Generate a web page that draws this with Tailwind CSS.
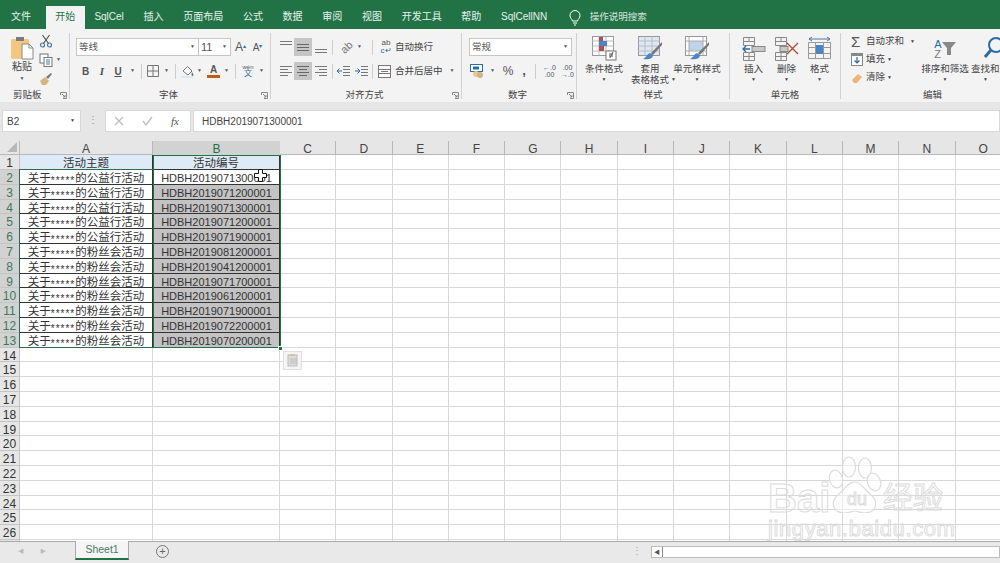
<!DOCTYPE html>
<html>
  <head>
    <meta charset="UTF-8" />
    <title>Excel</title>
    <script src="https://cdn.jsdelivr.net/npm/@tailwindcss/browser@4"></script>
  </head>
  <body class="w-[1000px] h-[563px] overflow-hidden bg-white text-[#444] font-['Liberation_Sans','Noto_Sans_CJK_SC',sans-serif]">

    <!-- title / tabs -->
    <div class="h-[29px] bg-[#217346] flex items-end pl-[11px] gap-[19.7px] text-[10px] text-white/90 whitespace-nowrap">
      <span class="h-[23px] leading-[22px]">文件</span>
      <span class="h-[23px] leading-[22px] w-[39px] -ml-[5px] -mr-[10px] text-center bg-[#f3f3f3] text-[#217346]">开始</span>
      <span class="h-[23px] leading-[22px]">SqlCel</span>
      <span class="h-[23px] leading-[22px]">插入</span>
      <span class="h-[23px] leading-[22px]">页面布局</span>
      <span class="h-[23px] leading-[22px]">公式</span>
      <span class="h-[23px] leading-[22px]">数据</span>
      <span class="h-[23px] leading-[22px]">审阅</span>
      <span class="h-[23px] leading-[22px]">视图</span>
      <span class="h-[23px] leading-[22px]">开发工具</span>
      <span class="h-[23px] leading-[22px]">帮助</span>
      <span class="h-[23px] leading-[22px]">SqlCellNN</span>
      <span class="h-[23px] flex items-center gap-[9px] ml-[2px]">
        <svg width="12" height="16" viewBox="0 0 12 16" fill="none" stroke="#fff" stroke-width="1"><path d="M3.5 11C3 9 1 8 1 5.5a5 5 0 0 1 10 0C11 8 9 9 8.500 11zM4 13h4M5 15h2"/></svg>
        <span class="text-white/80 text-[9.5px]">操作说明搜索</span>
      </span>
    </div>

    <!-- ribbon -->
    <div class="h-[73px] bg-[#f3f3f3] flex text-[9.5px] text-[#555] whitespace-nowrap">

      <!-- clipboard -->
      <div class="w-[70px] border-r border-[#d0d0d0] mt-[4px] mb-[3px] flex flex-col">
        <div class="flex flex-1 pl-[10px] pt-[1px]">
          <div class="w-[24px] flex flex-col items-center">
            <svg class="mt-[3px]" width="24" height="23" viewBox="0 0 24 23"><rect x="1" y="2" width="18" height="20" rx="1.500" fill="#f2c781"/><rect x="6" y="0" width="8" height="4" fill="#7a7a7a"/><path d="M12 7h7l4 4v11H12z" fill="#fff" stroke="#888"/><path d="M19 7v4h4" fill="none" stroke="#888"/></svg>
            <span class="text-[10px] leading-[11px] mt-[1px] text-[#444]">粘贴</span>
            <span class="text-[5px] leading-[12px]">▼</span>
          </div>
          <div class="ml-[5px] flex flex-col gap-[5px]">
            <svg width="14" height="14" viewBox="0 0 14 14" fill="none" stroke="#4a7ba6" stroke-width="1.200"><circle cx="3.500" cy="11" r="2"/><circle cx="10.500" cy="11" r="2"/><path d="M4.500 9.500 10.500 1M9.500 9.500 3.500 1" stroke="#555"/></svg>
            <div class="flex items-center gap-[3px]">
              <svg width="14" height="14" viewBox="0 0 14 14" fill="#fff" stroke="#777"><rect x="1" y="1" width="8" height="9"/><rect x="5" y="4.500" width="8" height="9"/><path d="M7 7h4M7 9h4M7 11h4" stroke="#4a7ba6"/></svg>
              <span class="text-[5px]">▼</span>
            </div>
            <svg width="14" height="14" viewBox="0 0 14 14"><path d="M1 9 6 5l4 4-3 4H3z" fill="#d9b27c"/><path d="m7 5 5-4 1 1-4 5z" fill="#777"/></svg>
          </div>
        </div>
        <div class="h-[8px] flex items-center justify-between pl-[13px] pr-[2px] leading-none">
          <span class="text-[#444]">剪贴板</span>
          <svg width="7" height="7" viewBox="0 0 7 7" fill="none" stroke="#888"><path d="M.5 3V.5H6.500V6.500H3M2 2l3 3M5 3v2H3"/></svg>
        </div>
      </div>

      <!-- font -->
      <div class="w-[201px] border-r border-[#d0d0d0] mt-[4px] mb-[3px] flex flex-col">
        <div class="flex-1 pl-[6px]">
          <div class="flex items-center h-[18px] mt-[5px]">
            <div class="w-[123px] h-[18px] bg-white border border-[#c6c6c6] flex items-center justify-between pl-[2px] pr-[3px]"><span>等线</span><span class="text-[5px]">▼</span></div>
            <div class="w-[32px] h-[18px] bg-white border border-l-0 border-[#c6c6c6] flex items-center justify-between pl-[2px] pr-[3px]"><span class="text-[11px]">11</span><span class="text-[5px]">▼</span></div>
            <span class="ml-[1px] text-[12px] w-[17px] text-center">A<sup class="text-[6px] text-[#2b6ca3]">▴</sup></span>
            <span class="text-[10px] w-[17px] text-center">A<sup class="text-[6px] text-[#2b6ca3]">▾</sup></span>
          </div>
          <div class="flex items-center h-[18px] mt-[6px] pl-[1px]">
            <span class="w-[17px] text-center font-bold text-[10px]">B</span>
            <span class="w-[16px] text-center italic font-['Liberation_Serif'] font-bold text-[11px]">I</span>
            <span class="w-[16px] text-center underline font-bold text-[10px]">U</span>
            <span class="w-[15px] text-[5px] pl-[4px]">▼</span>
            <span class="w-px h-[15px] bg-[#ccc] mr-[5px]"></span>
            <svg width="12" height="12" viewBox="0 0 12 12" fill="none" stroke="#777"><path d="M.5.500h11v11H.5zM6 .5v11M.5 6h11"/></svg>
            <span class="w-[16px] text-[5px] pl-[5px]">▼</span>
            <span class="w-px h-[15px] bg-[#ccc] mr-[5px]"></span>
            <svg width="14" height="14" viewBox="0 0 14 14"><path d="M2 7 6.500 2.500 11 7l-4 4z" fill="#fff" stroke="#777"/><path d="M11 8c1 1.500 1.500 2 1.500 3a1 1 0 0 1-2 0c0-1 0-2 .5-3z" fill="#777"/><rect y="12" width="12" height="2" fill="#dbe7f3"/></svg>
            <span class="w-[12px] text-[5px] pl-[2px]">▼</span>
            <div class="w-[13px] flex flex-col items-center"><span class="text-[10px] leading-[11px] font-bold">A</span><span class="w-[13px] h-[3px] bg-[#c55a11]"></span></div>
            <span class="w-[15px] text-[5px] pl-[4px]">▼</span>
            <span class="w-px h-[15px] bg-[#ccc] mr-[5px]"></span>
            <div class="w-[14px] flex flex-col items-center leading-none"><span class="text-[6px]">wén</span><span class="text-[8px] text-[#2b6ca3]">文</span></div>
            <span class="text-[5px] pl-[4px]">▼</span>
          </div>
        </div>
        <div class="h-[8px] flex items-center pr-[2px] leading-none">
          <span class="flex-1 text-center text-[#444] pl-[6px]">字体</span>
          <svg width="7" height="7" viewBox="0 0 7 7" fill="none" stroke="#888"><path d="M.5 3V.5H6.500V6.500H3M2 2l3 3M5 3v2H3"/></svg>
        </div>
      </div>

      <!-- alignment -->
      <div class="w-[191px] border-r border-[#d0d0d0] mt-[4px] mb-[3px] flex flex-col">
        <div class="flex-1 pl-[6px]">
          <div class="flex items-center h-[18px] mt-[5px]">
            <div class="w-[17px] h-[18px] flex items-center justify-center"><svg width="12" height="18" viewBox="0 0 12 18" stroke="#777"><path d="M0 3.500h12M0 6.500h12"/></svg></div>
            <div class="w-[18px] h-[18px] flex items-center justify-center bg-[#c6c6c6]"><svg width="12" height="18" viewBox="0 0 12 18" stroke="#666"><path d="M0 6.500h12M0 9.500h12M0 12.500h12"/></svg></div>
            <div class="w-[18px] h-[18px] flex items-center justify-center"><svg width="12" height="18" viewBox="0 0 12 18" stroke="#777"><path d="M0 11.500h12M0 14.500h12"/></svg></div>
            <span class="w-px h-[15px] bg-[#ccc] ml-[2px] mr-[7px]"></span>
            <span class="w-[13px] text-[#777] text-[11px] -rotate-45 text-center">ab</span>
            <span class="w-[19px] text-[5px] pl-[4px]">▼</span>
            <span class="w-px h-[15px] bg-[#ccc] mr-[6px]"></span>
            <span class="w-[14px] leading-[8px] text-[8px] text-center"><span class="text-[#555]">ab</span><br><span class="text-[#2b6ca3]">c↵</span></span>
            <span class="ml-[2px] text-[#444]">自动换行</span>
          </div>
          <div class="flex items-center h-[18px] mt-[6px]">
            <div class="w-[17px] h-[18px] flex items-center justify-center"><svg width="12" height="12" viewBox="0 0 12 12" stroke="#777"><path d="M0 1.500h12M0 4.500h8M0 7.500h12M0 10.500h8"/></svg></div>
            <div class="w-[18px] h-[18px] flex items-center justify-center bg-[#c6c6c6]"><svg width="12" height="12" viewBox="0 0 12 12" stroke="#666"><path d="M0 1.500h12M2 4.500h8M0 7.500h12M2 10.500h8"/></svg></div>
            <div class="w-[18px] h-[18px] flex items-center justify-center"><svg width="12" height="12" viewBox="0 0 12 12" stroke="#777"><path d="M0 1.500h12M4 4.500h8M0 7.500h12M4 10.500h8"/></svg></div>
            <span class="w-px h-[15px] bg-[#ccc] ml-[2px] mr-[4px]"></span>
            <svg width="13" height="12" viewBox="0 0 13 12" fill="none"><path d="M6 1.500h7M6 4.500h7M6 7.500h7M6 10.500h7" stroke="#777"/><path d="M5 6H0M2.500 3.500 0 6l2.500 2.500" stroke="#2b6ca3"/></svg>
            <svg class="ml-[5px]" width="13" height="12" viewBox="0 0 13 12" fill="none"><path d="M6 1.500h7M6 4.500h7M6 7.500h7M6 10.500h7" stroke="#777"/><path d="M0 6h5M2.500 3.500 5 6 2.500 8.500" stroke="#2b6ca3"/></svg>
            <span class="w-px h-[15px] bg-[#ccc] ml-[4px] mr-[5px]"></span>
            <svg width="13" height="13" viewBox="0 0 13 13" fill="#fff" stroke="#777"><rect x=".5" y=".5" width="12" height="12"/><path d="M.5 4.500h12M.5 8.500h12M3 6.500h7" /></svg>
            <span class="ml-[4px] text-[#444]">合并后居中</span>
            <span class="text-[5px] pl-[7px]">▼</span>
          </div>
        </div>
        <div class="h-[8px] flex items-center pr-[2px] leading-none">
          <span class="flex-1 text-center text-[#444] pl-[6px]">对齐方式</span>
          <svg width="7" height="7" viewBox="0 0 7 7" fill="none" stroke="#888"><path d="M.5 3V.5H6.500V6.500H3M2 2l3 3M5 3v2H3"/></svg>
        </div>
      </div>

      <!-- number -->
      <div class="w-[115px] border-r border-[#d0d0d0] mt-[4px] mb-[3px] flex flex-col">
        <div class="flex-1 pl-[7px]">
          <div class="w-[103px] h-[18px] mt-[5px] bg-white border border-[#c6c6c6] flex items-center justify-between pl-[2px] pr-[3px]"><span>常规</span><span class="text-[5px]">▼</span></div>
          <div class="flex items-center h-[18px] mt-[6px] pl-[1px]">
            <svg width="14" height="14" viewBox="0 0 14 14"><rect x=".5" y=".5" width="12" height="7" fill="#fff" stroke="#2b6ca3"/><rect x="3" y="2.500" width="6" height="3" fill="#2b6ca3"/><circle cx="6" cy="10" r="3" fill="#e8c98f"/><circle cx="10" cy="11" r="3" fill="#cdb48a"/></svg>
            <span class="w-[16px] text-[5px] pl-[6px]">▼</span>
            <span class="w-[16px] text-[12px] text-center">%</span>
            <span class="w-[16px] text-[13px] font-bold text-center leading-[10px]">,</span>
            <span class="w-px h-[15px] bg-[#ccc] ml-[3px] mr-[5px]"></span>
            <span class="w-[17px] text-[7px] leading-[7px] text-center"><span class="text-[#2b6ca3]">←</span>.0<br>.00</span>
            <span class="w-[17px] text-[7px] leading-[7px] text-center ml-[1px]">.00<br><span class="text-[#2b6ca3]">→</span>.0</span>
          </div>
        </div>
        <div class="h-[8px] flex items-center pr-[2px] leading-none">
          <span class="flex-1 text-center text-[#444] pl-[6px]">数字</span>
          <svg width="7" height="7" viewBox="0 0 7 7" fill="none" stroke="#888"><path d="M.5 3V.5H6.500V6.500H3M2 2l3 3M5 3v2H3"/></svg>
        </div>
      </div>

      <!-- styles -->
      <div class="w-[153px] border-r border-[#d0d0d0] mt-[4px] mb-[3px] flex flex-col">
        <div class="flex-1 flex pl-[1px] text-[#444] leading-[11px] text-center">
          <div class="w-[52px] flex flex-col items-center">
            <svg class="mt-[3px]" width="25" height="25" viewBox="0 0 25 25"><rect x=".5" y=".5" width="21" height="19" fill="#fff" stroke="#999"/><path d="M7 .5v19M14 .5v19M.5 5h21M.5 10h21M.5 15h21" stroke="#bbb"/><rect x="7" y="1" width="4" height="4" fill="#b0504a"/><rect x="7" y="5" width="8" height="5" fill="#4a86c5"/><rect x="7" y="10" width="5" height="5" fill="#b0504a"/><rect x="14" y="15" width="10" height="9" fill="#fff" stroke="#777"/><path d="M17 20h4M17 18h4M21 16l-3 6" stroke="#555" fill="none"/></svg>
            <span class="mt-[2px]">条件格式</span>
            <span class="text-[5px]">▼</span>
          </div>
          <div class="w-[40px] flex flex-col items-center">
            <svg class="mt-[3px]" width="25" height="25" viewBox="0 0 25 25"><rect x=".5" y=".5" width="21" height="19" fill="#dfe8f2" stroke="#999"/><path d="M7 .5v19M14 .5v19M.5 5h21M.5 10h21M.5 15h21" stroke="#b5bcc5"/><path d="M24 6 13 17l2 2 9-10z" fill="#777"/><path d="M12 17c-3 1-3 4-7 6 5 1 10 0 10-4z" fill="#4a86c5"/></svg>
            <span class="mt-[2px]">套用</span>
            <span class="relative">表格格式<span class="absolute left-full top-0 text-[5px] pl-[2px]">▼</span></span>
          </div>
          <div class="w-[54px] flex flex-col items-center">
            <svg class="mt-[3px]" width="25" height="25" viewBox="0 0 25 25"><rect x=".5" y=".5" width="21" height="19" fill="#fff" stroke="#999"/><rect x="4" y="5" width="14" height="10" fill="#bcd3ea"/><path d="M.5 5h21M.5 15h21M4 .5v19M18 .5v19" stroke="#aaa"/><path d="M24 6 13 17l2 2 9-10z" fill="#777"/><path d="M12 17c-3 1-3 4-7 6 5 1 10 0 10-4z" fill="#4a86c5"/></svg>
            <span class="mt-[2px]">单元格样式</span>
            <span class="text-[5px]">▼</span>
          </div>
        </div>
        <div class="h-[8px] leading-[8px] text-center text-[#444]">样式</div>
      </div>

      <!-- cells -->
      <div class="w-[111px] border-r border-[#d0d0d0] mt-[4px] mb-[3px] flex flex-col">
        <div class="flex-1 flex pl-[7px] text-[#444] leading-[11px] text-center">
          <div class="w-[33px] flex flex-col items-center">
            <svg class="mt-[3px]" width="25" height="25" viewBox="0 0 25 25" fill="none" stroke="#888"><path d="M2.500 1.500h11v8h-11zM2.500 5.500h11M8 1.500v4"/><path d="M2.500 16.500h11v8h-11zM2.500 20.500h11M8 16.500v8"/><rect x="11" y="10.500" width="13" height="5" fill="#c8c8c8"/><path d="M9 13H2M5 10l-3 3 3 3" stroke="#2b6ca3" stroke-width="1.300"/></svg>
            <span class="mt-[2px]">插入</span>
            <span class="text-[5px]">▼</span>
          </div>
          <div class="w-[33px] flex flex-col items-center">
            <svg class="mt-[3px]" width="25" height="25" viewBox="0 0 25 25" fill="none" stroke="#888"><path d="M1.500 1.500h11v8h-11zM1.500 5.500h11M7 1.500v4"/><path d="M1.500 16.500h11v8h-11zM1.500 20.500h11M7 16.500v8"/><rect x="6" y="10.500" width="8" height="5" fill="#c8c8c8"/><path d="m13 7 11 11M24 7 13 18" stroke="#b5482f" stroke-width="1.300"/></svg>
            <span class="mt-[2px]">删除</span>
            <span class="text-[5px]">▼</span>
          </div>
          <div class="w-[33px] flex flex-col items-center">
            <svg class="mt-[3px]" width="25" height="25" viewBox="0 0 25 25" fill="none" stroke="#999"><path d="M1.500 6.500h22v16h-22zM1.500 11.500h22M1.500 17.500h22M8.500 6.500v16M16.500 6.500v16"/><rect x="9" y="9" width="7" height="9" fill="#4a86c5" stroke="none"/><path d="M2 3h21M5 1 2 3l3 2M20 1l3 2-3 2" stroke="#4a7ba6"/></svg>
            <span class="mt-[2px]">格式</span>
            <span class="text-[5px]">▼</span>
          </div>
        </div>
        <div class="h-[8px] leading-[8px] text-center text-[#444]">单元格</div>
      </div>

      <!-- editing -->
      <div class="flex-1 mt-[4px] mb-[3px] flex flex-col overflow-hidden">
        <div class="flex-1 flex text-[#444]">
          <div class="w-[80px] pl-[10px] pt-[2px] flex flex-col gap-[5px] shrink-0">
            <div class="h-[13px] flex items-center">
              <span class="w-[13px] text-[15px] leading-none text-[#555]">Σ</span>
              <span class="ml-[2px]">自动求和</span><span class="text-[5px] pl-[6px]">▼</span>
            </div>
            <div class="h-[13px] flex items-center">
              <svg width="12" height="13" viewBox="0 0 12 13" fill="#fff"><rect x=".5" y=".5" width="11" height="12" stroke="#888"/><rect x="1" y="1" width="10" height="2" fill="#888"/><path d="M6 4v6M3.500 7.500 6 10l2.500-2.500" fill="none" stroke="#2b6ca3" stroke-width="1.200"/></svg>
              <span class="ml-[3px]">填充</span><span class="text-[5px] pl-[2px]">▼</span>
            </div>
            <div class="h-[13px] flex items-center">
              <svg width="12" height="12" viewBox="0 0 12 12"><path d="M1 8 7 2l4 3-5 6H3z" fill="#eeb37a"/></svg>
              <span class="ml-[3px]">清除</span><span class="text-[5px] pl-[2px]">▼</span>
            </div>
          </div>
          <div class="w-[48px] flex flex-col items-center shrink-0 leading-[11px]">
            <div class="h-[25px] mt-[3px] flex items-center">
              <div class="flex flex-col leading-[10px] text-[11px]"><span class="text-[#2b6ca3]">A</span><span class="text-[#777]">Z</span></div>
              <svg width="14" height="13" viewBox="0 0 14 13"><path d="M0 0h14L9 6v7H5V6z" fill="#888"/></svg>
            </div>
            <span class="mt-[2px]">排序和筛选</span>
            <span class="text-[5px]">▼</span>
          </div>
          <div class="w-[40px] flex flex-col items-start shrink-0 leading-[11px] ml-[2px]">
            <svg class="mt-[3px] ml-[13px]" width="18" height="25" viewBox="0 0 18 25" fill="none" stroke="#2b6ca3" stroke-width="2"><circle cx="12" cy="9" r="7"/><path d="m7 14-6 7" stroke-width="3"/></svg>
            <span class="mt-[2px]">查找和选择</span>
            <span class="text-[5px] pl-[12px]">▼</span>
          </div>
        </div>
        <div class="h-[8px] leading-[8px] text-[#444] pl-[82px]">编辑</div>
      </div>
    </div>

    <!-- formula bar -->
    <div class="h-[39px] bg-[#e6e6e6] pt-[8px] flex items-start text-[#444]">
      <div class="ml-[2px] w-[79px] h-[22px] bg-white border border-[#d8d8d8] flex items-center justify-between pl-[4px] pr-[5px] text-[10px]"><span>B2</span><span class="text-[5px]">▼</span></div>
      <span class="w-[24px] h-[22px] leading-[20px] text-center text-[#999] text-[10px]">⋮</span>
      <div class="w-[86px] h-[22px] bg-white border border-[#d8d8d8] flex items-center text-[#bbb]">
        <svg class="ml-[8px]" width="10" height="10" viewBox="0 0 10 10" stroke="#bbb" stroke-width="1.200"><path d="m1 1 8 8M9 1 1 9"/></svg>
        <svg class="ml-[18px]" width="11" height="10" viewBox="0 0 11 10" fill="none" stroke="#bbb" stroke-width="1.300"><path d="m1 5 3 4 6-8"/></svg>
        <span class="ml-[18px] text-[11px] italic font-['Liberation_Serif'] text-[#555]">fx</span>
      </div>
      <div class="ml-[2px] flex-1 h-[22px] bg-white border border-[#d8d8d8] flex items-center pl-[8px] text-[10px]">HDBH2019071300001</div>
    </div>

    <!-- sheet -->
    <div class="relative h-[400px] overflow-hidden bg-white">
      <div id="sheet"></div>

      <!-- selection boxes -->
      <div class="absolute left-[19px] top-[28px] w-[135px] h-[179px] border-[1.500px] border-[#2f6b4f]"></div>
      <div class="absolute left-[153px] top-[14px] w-[128px] h-[193px] border-[1.500px] border-[#217346]"></div>
      <div class="absolute left-[278px] top-[205px] w-[5px] h-[5px] bg-[#217346] border border-white"></div>

      <!-- paste options -->
      <div class="absolute left-[283px] top-[210px] w-[19px] h-[19px] bg-[#f4f4f4] border border-[#e0e0e0] flex items-center justify-center">
        <svg width="12" height="13" viewBox="0 0 12 13"><rect x="1" y="1" width="9" height="11" fill="#ddd" stroke="#bbb"/><path d="M3 5h7M3 7h7M3 9h7" stroke="#bbb"/><rect x="3" y="0" width="5" height="2" fill="#d9c39a"/></svg>
      </div>

      <!-- cursor -->
      <svg class="absolute left-[254px] top-[28px]" width="13" height="13" viewBox="0 0 13 13"><path d="M4.500 .5h4v4h4v4h-4v4h-4v-4h-4v-4h4z" fill="#fff" stroke="#111"/></svg>

      <!-- watermark -->
      <div class="absolute left-[768px] top-[314px] w-[180px] h-[86px] text-transparent [-webkit-text-stroke:1px_#dcdcdc]">
        <svg class="absolute left-[60px] top-[0]" width="54" height="58" viewBox="0 0 54 58" fill="#fff" fill-opacity=".5" stroke="#dcdcdc" stroke-width="1.200"><ellipse cx="8" cy="24" rx="6.500" ry="9" transform="rotate(-15 8 24)"/><ellipse cx="21" cy="12" rx="6.500" ry="10"/><ellipse cx="37" cy="13" rx="6.500" ry="10"/><ellipse cx="46" cy="27" rx="6.500" ry="9" transform="rotate(-20 46 27)"/><path d="M27 27c6 0 9 7 15 12 10 8 6 19-6 19-4 0-6-2-9-2s-6 2-10 2c-12 0-16-11-6-19 6-5 9-12 16-12z"/></svg>
        <span class="absolute left-[0] top-[22.500px] text-[40px] font-bold leading-[40px]">Bai</span>
        <span class="absolute left-[79px] top-[31.500px] text-[18px] leading-[24px]">du</span>
        <span class="absolute left-[115px] top-[25.500px] text-[30px] leading-[34px] whitespace-nowrap">经验</span>
        <span class="absolute left-[0] top-[62px] text-[22px] tracking-[.6px] leading-[24px] whitespace-nowrap">jingyan.baidu.com</span>
      </div>
    </div>

    <!-- sheet tabs -->
    <div class="h-[22px] bg-[#e9e9e9] border-t border-[#a8a8a8] flex items-start relative text-[#666]">
      <span class="ml-[18px] mt-[5px] text-[6px] text-[#bbb]">◀</span>
      <span class="ml-[16px] mt-[5px] text-[6px] text-[#bbb]">▶</span>
      <div class="ml-[29px] -mt-px w-[54px] h-[19px] bg-[#f5f5f5] border-x border-[#a8a8a8] border-b-2 border-b-[#217346] text-[#4b7a64] text-[10.500px] leading-[17px] text-center">Sheet1</div>
      <span class="ml-[27px] mt-[3px] w-[13px] h-[13px] rounded-full border border-[#777] flex items-center justify-center text-[11px] leading-none">+</span>
      <span class="ml-[463px] mt-[1px] text-[10px] text-[#aaa]">⋮</span>
      <div class="ml-[9px] mt-[4px] flex-1 h-[12px] bg-white border border-[#bdbdbd] flex items-center"><span class="w-[11px] h-full border-r border-[#888] text-[6px] leading-[10px] text-center text-[#555]">◀</span></div>
    </div>

    <script>
      var cols = ['C','D','E','F','G','H','I','J','K','L','M','N','O'];
      var a = ['公益行','公益行','公益行','公益行','公益行','粉丝会','粉丝会','粉丝会','粉丝会','粉丝会','粉丝会','粉丝会'];
      var b = ['1300001','1200001','1300001','1200001','1900001','81200001','41200001','71700001','61200001','71900001','72200001','70200001'];
      b = b.map(function (s, i) { return i < 5 ? 'HDBH201907' + s : 'HDBH20190' + s; });
      var hd = 'h-[14px] shrink-0 bg-[#e6e6e6] border-r border-b border-[#b8b8b8] text-[12px] leading-[17px] text-center ';
      var html = '<div class="flex h-[14px]"><div class="w-[20px] h-[14px] shrink-0 bg-[#e6e6e6] border-r border-b border-[#b8b8b8] flex items-end justify-end pr-[2px] pb-[2px]"><svg width="10" height="10" viewBox="0 0 10 10"><path d="M10 0v10H0z" fill="#b8b8b8"/></svg></div>'
        + '<div class="w-[133px] ' + hd + '">A</div><div class="w-[127px] h-[14px] shrink-0 bg-[#d2d2d2] text-[#217346] text-[12px] leading-[17px] text-center">B</div>';
      cols.forEach(function (c) { html += '<div class="w-[56.3px] ' + hd + '">' + c + '</div>'; });
      html += '</div>';
      for (var r = 1; r <= 27; r++) {
        var sel = r >= 2 && r <= 13;
        var num = sel ? 'bg-[#d2d2d2] text-[#3c7a5c] border-r border-[#217346]' : 'bg-[#e6e6e6] border-r border-[#b8b8b8]';
        var h = r === 1 ? 'h-[15px]' : 'h-[14.8px]';
        html += '<div class="flex ' + h + ' text-[11.5px] text-[#333] leading-[17px] text-center">';
        html += '<div class="w-[20px] shrink-0 border-b border-[#c4c4c4] text-[12px] ' + num + '">' + r + '</div>';
        if (r === 1) {
          html += '<div class="w-[133px] shrink-0 bg-[#deeaf6] border-r border-b border-[#333]">活动主题</div>';
          html += '<div class="w-[127px] shrink-0 bg-[#deeaf6] border-r border-b border-[#333]">活动编号</div>';
        } else if (sel) {
          html += '<div class="w-[133px] shrink-0 border-r border-b border-[#333] whitespace-nowrap">关于<span class="relative top-[2px] text-[10px] tracking-[1px]">*****</span>的' + a[r - 2] + '活动</div>';
          html += '<div class="w-[127px] shrink-0 border-r border-b border-[#333] text-[11px] pl-[1px] ' + (r === 2 ? 'bg-white' : 'bg-[#c3c3c3]') + '">' + b[r - 2] + '</div>';
        } else {
          html += '<div class="w-[133px] shrink-0 border-r border-b border-[#d8d8d8]"></div><div class="w-[127px] shrink-0 border-r border-b border-[#d8d8d8]"></div>';
        }
        cols.forEach(function () { html += '<div class="w-[56.3px] shrink-0 border-r border-b border-[#d8d8d8]"></div>'; });
        html += '</div>';
      }
      document.getElementById('sheet').innerHTML = html;
    </script>
  </body>
</html>
